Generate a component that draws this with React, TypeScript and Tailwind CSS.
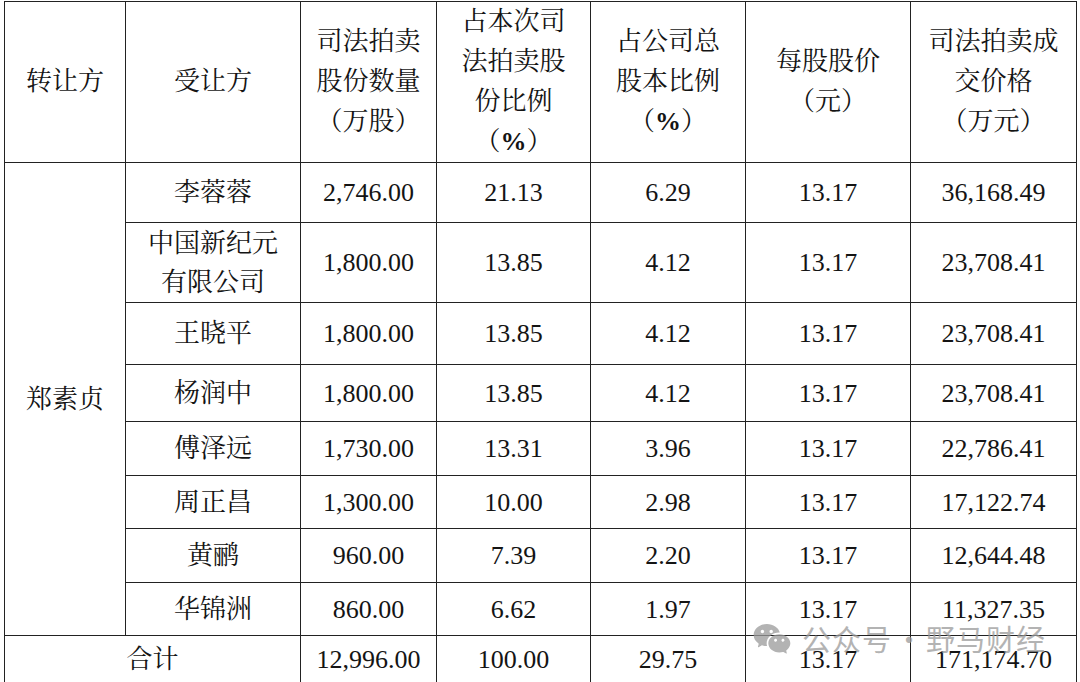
import { RiWechatFill } from 'react-icons/ri'

const serif = { fontFamily: '"Liberation Serif", "Noto Serif CJK SC", "Noto Sans CJK SC", serif' }

const rows = [
  { name: ['李蓉蓉'], h: 60, qty: '2,746.00', a: '21.13', b: '6.29', price: '13.17', total: '36,168.49' },
  { name: ['中国新纪元', '有限公司'], h: 80, qty: '1,800.00', a: '13.85', b: '4.12', price: '13.17', total: '23,708.41' },
  { name: ['王晓平'], h: 62, qty: '1,800.00', a: '13.85', b: '4.12', price: '13.17', total: '23,708.41' },
  { name: ['杨润中'], h: 57, qty: '1,800.00', a: '13.85', b: '4.12', price: '13.17', total: '23,708.41' },
  { name: ['傅泽远'], h: 54, qty: '1,730.00', a: '13.31', b: '3.96', price: '13.17', total: '22,786.41' },
  { name: ['周正昌'], h: 53, qty: '1,300.00', a: '10.00', b: '2.98', price: '13.17', total: '17,122.74' },
  { name: ['黄鹂'], h: 54, qty: '960.00', a: '7.39', b: '2.20', price: '13.17', total: '12,644.48' },
  { name: ['华锦洲'], h: 53, qty: '860.00', a: '6.62', b: '1.97', price: '13.17', total: '11,327.35' },
]

const headers = [
  ['转让方'],
  ['受让方'],
  ['司法拍卖', '股份数量', '（万股）'],
  ['占本次司', '法拍卖股', '份比例', '%'],
  ['占公司总', '股本比例', '%'],
  ['每股股价', '（元）'],
  ['司法拍卖成', '交价格', '（万元）'],
]

const cell = 'border-[1.5px] border-[#222] text-center align-middle p-0'

export default function App() {
  return (
    <div className="relative w-[1080px] h-[682px] bg-white overflow-hidden text-[#141414]" style={serif}>
      <div className="pl-[4px] pt-[1px]">
        <table className="border-collapse table-fixed w-[1072px] text-[26px]">
          <colgroup>
            <col className="w-[121px]" />
            <col className="w-[175px]" />
            <col className="w-[136px]" />
            <col className="w-[154px]" />
            <col className="w-[155px]" />
            <col className="w-[165px]" />
            <col className="w-[166px]" />
          </colgroup>
          <thead>
            <tr className="h-[159px]">
              {headers.map((lines, i) => (
                <th key={i} className={`${cell} font-normal leading-[40px]`}>
                  {lines.map(l =>
                    l === '%' ? (
                      <div key={l}>
                        （<span className="font-bold">%</span>）
                      </div>
                    ) : (
                      <div key={l}>{l}</div>
                    )
                  )}
                </th>
              ))}
            </tr>
          </thead>
          <tbody>
            {rows.map((r, i) => (
              <tr key={i} style={{ height: r.h }}>
                {i === 0 && (
                  <td rowSpan={8} className={cell}>
                    郑素贞
                  </td>
                )}
                <td className={`${cell} leading-[39px]`}>
                  {r.name.map(n => (
                    <div key={n}>{n}</div>
                  ))}
                </td>
                <td className={cell}>{r.qty}</td>
                <td className={cell}>{r.a}</td>
                <td className={cell}>{r.b}</td>
                <td className={cell}>{r.price}</td>
                <td className={cell}>{r.total}</td>
              </tr>
            ))}
            <tr className="h-[47px]">
              <td colSpan={2} className={cell}>
                合计
              </td>
              <td className={cell}>12,996.00</td>
              <td className={cell}>100.00</td>
              <td className={cell}>29.75</td>
              <td className={cell}>13.17</td>
              <td className={cell}>171,174.70</td>
            </tr>
          </tbody>
        </table>
      </div>

      {/* watermark */}
      <div
        className="absolute left-[752px] top-[617px] flex items-center text-[29px] text-[#9a9a9a] opacity-75"
        style={{ fontFamily: '"Noto Sans CJK SC", sans-serif' }}
      >
        <RiWechatFill className="w-[40px] h-[40px] mr-[10px]" />
        <span className="tracking-[1px]">公众号</span>
        <span className="inline-block w-[34px] text-center">·</span>
        <span className="tracking-[1px]">野马财经</span>
      </div>
    </div>
  )
}
